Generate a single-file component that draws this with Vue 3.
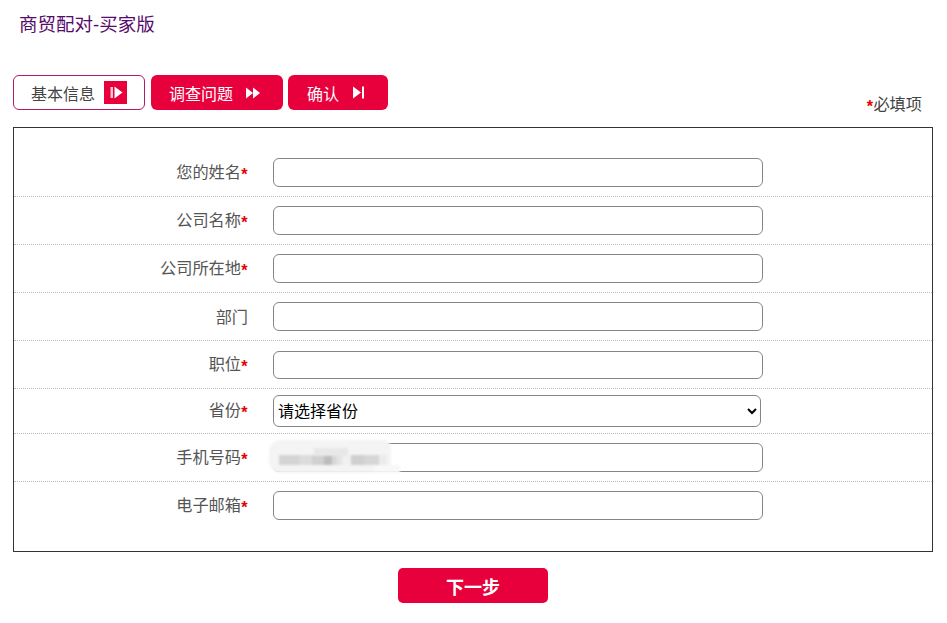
<template>
  <div class="page">
    <h1 class="title">商贸配对-买家版</h1>
    <div class="steps-bar">
      <div class="steps">
        <div class="step step-current">
          <span>基本信息</span>
          <span class="step-badge">
            <svg width="23" height="23" viewBox="0 0 23 23"><rect x="6.5" y="6" width="2.5" height="11" fill="#f9c3d2" /><path d="M10.5 5.5l8 6-8 6z" fill="#fff" /></svg>
          </span>
        </div>
        <div class="step">
          <span>调查问题</span>
          <svg class="step-icon" width="16" height="12" viewBox="0 0 16 12"><path d="M1 0.5l7 5.5-7 5.5zM8 0.5l7 5.5-7 5.5z" fill="#fff" /></svg>
        </div>
        <div class="step step-short">
          <span>确认</span>
          <svg class="step-icon" width="13" height="13" viewBox="0 0 13 13"><path d="M1 0.5l8 6-8 6z" fill="#fff" /><rect x="10" y="0.5" width="2" height="12" fill="#fff" /></svg>
        </div>
      </div>
      <div class="required-note"><i class="star">*</i>必填项</div>
    </div>

    <form class="frame" @submit.prevent>
      <div v-for="row in rows" :key="row.label" class="row" :class="{ 'row-select': row.select }">
        <label class="label">{{ row.label }}<i v-if="row.required" class="star">*</i></label>
        <div class="field">
          <select v-if="row.select" class="select">
            <option>请选择省份</option>
          </select>
          <input v-else class="input" type="text" />
          <div v-if="row.masked" class="mask">
            <span
              v-for="(block, i) in maskBlocks"
              :key="i"
              class="mask-block"
              :style="{ width: block[0] + 'px', background: block[1] }"
            ></span>
          </div>
        </div>
      </div>
    </form>

    <div class="actions">
      <button class="next" type="button">下一步</button>
    </div>
  </div>
</template>

<script setup>
const rows = [
  { label: '您的姓名', required: true },
  { label: '公司名称', required: true },
  { label: '公司所在地', required: true },
  { label: '部门', required: false },
  { label: '职位', required: true },
  { label: '省份', required: true, select: true },
  { label: '手机号码', required: true, masked: true },
  { label: '电子邮箱', required: true }
]

// blurred phone number
const maskBlocks = [
  [20, '#d4d4d4'],
  [13, '#dcdcdc'],
  [12, '#d0d0d0'],
  [8, '#bdbdbd'],
  [5, '#d8d8d8'],
  [5, '#e4e4e4'],
  [9, '#f0f0f0'],
  [13, '#cfcfcf'],
  [15, '#d6d6d6'],
  [8, '#ececec']
]
</script>

<style>
body {
  background: #fff;
}
</style>

<style scoped>
.page {
  width: 947px;
  height: 623px;
  overflow: hidden;
  box-sizing: border-box;
  padding: 0 14px 0 13px;
  font-family: "Liberation Sans", "Noto Sans CJK SC", sans-serif;
}

.title {
  margin: 0;
  padding: 14px 0 0 6px;
  height: 75px;
  box-sizing: border-box;
  font-size: 18.5px;
  line-height: 21px;
  font-weight: normal;
  color: #560a6b;
}

.steps-bar {
  display: flex;
  justify-content: space-between;
  align-items: flex-end;
  height: 52px;
  box-sizing: border-box;
}

.steps {
  display: flex;
  gap: 6px;
  align-self: flex-start;
}

.step {
  width: 132px;
  height: 35px;
  box-sizing: border-box;
  display: flex;
  align-items: center;
  gap: 12px;
  padding-left: 18px;
  border-radius: 6px;
  background: #e8003c;
  color: #fff;
  font-size: 16px;
}

.step + .step + .step {
  margin-left: -1px;
}

.step-current {
  background: #fff;
  border: 1px solid #b5196e;
  color: #444;
  gap: 8px;
  padding-left: 17px;
}

.step-short {
  width: 100px;
  gap: 13px;
  padding-left: 19px;
}

.step-badge {
  width: 23px;
  height: 23px;
  background: #e8003c;
  display: block;
  margin-left: 1px;
}

.step-badge svg,
.step-icon {
  display: block;
}

.required-note {
  font-size: 16.2px;
  line-height: 20px;
  color: #444;
  padding: 0 11px 11px 0;
}

.star {
  display: inline-block;
  width: 7px;
  text-align: center;
  color: #e80000;
  font-style: normal;
  font-weight: bold;
  vertical-align: -2px;
}

.frame {
  width: 920px;
  height: 425px;
  box-sizing: border-box;
  border: 1px solid #333;
  padding-top: 21px;
}

.row {
  display: flex;
  align-items: center;
  height: 48px;
  box-sizing: border-box;
  border-bottom: 1px dotted #bdbdbd;
}

.row:last-child {
  height: 47px;
  border-bottom: none;
}

.row:nth-child(5) .input {
  height: 28px;
  margin-top: 1px;
}

.row-select {
  height: 45px;
}

.label {
  width: 234px;
  text-align: right;
  font-size: 16.2px;
  line-height: 20px;
  color: #555;
}

.field {
  position: relative;
  margin-left: 25px;
}

.input {
  display: block;
  width: 490px;
  height: 29px;
  box-sizing: border-box;
  border: 1px solid #858585;
  border-radius: 6px;
  background: #fff;
  outline: none;
}

.select {
  display: block;
  width: 488px;
  height: 32px;
  box-sizing: border-box;
  border: 1px solid #858585;
  border-radius: 6px;
  background: #fff;
  color: #000;
  font-family: inherit;
  font-size: 16px;
  padding-left: 0;
}

.mask {
  position: absolute;
  left: -4px;
  top: -3px;
  width: 122px;
  height: 33px;
  display: flex;
  align-items: flex-end;
  padding: 0 0 8px 10px;
  box-sizing: border-box;
  background: #f4f4f4;
  border-radius: 12px 8px 6px 12px;
  filter: blur(0.8px);
}

.mask::before {
  content: "";
  position: absolute;
  left: 45px;
  top: 8px;
  width: 34px;
  height: 8px;
  background: #e8e8e8;
}

.mask::after {
  content: "";
  position: absolute;
  left: 105px;
  bottom: 0;
  width: 26px;
  height: 8px;
  background: #f8f8f8;
}

.mask-block {
  height: 10px;
}

.actions {
  display: flex;
  justify-content: center;
  padding: 16px 0 0 0;
}

.next {
  width: 150px;
  height: 35px;
  border: none;
  border-radius: 5px;
  background: #e8003c;
  color: #fff;
  font-family: inherit;
  font-size: 18px;
  font-weight: bold;
}
</style>
